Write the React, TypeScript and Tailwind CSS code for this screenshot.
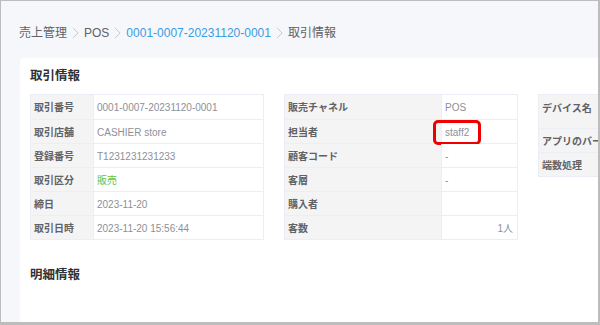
const FONT = { fontFamily: '"Liberation Sans", "Noto Sans CJK JP", sans-serif' };

type Row = { label: string; value?: string; tone?: "green"; right?: boolean; mark?: boolean; tall?: boolean };

const left: Row[] = [
  { label: "取引番号", value: "0001-0007-20231120-0001" },
  { label: "取引店舗", value: "CASHIER store" },
  { label: "登録番号", value: "T1231231231233" },
  { label: "取引区分", value: "販売", tone: "green" },
  { label: "締日", value: "2023-11-20" },
  { label: "取引日時", value: "2023-11-20 15:56:44" },
];

const middle: Row[] = [
  { label: "販売チャネル", value: "POS" },
  { label: "担当者", value: "staff2", mark: true },
  { label: "顧客コード", value: "-" },
  { label: "客層", value: "-" },
  { label: "購入者", value: "" },
  { label: "客数", value: "1人", right: true },
];

// third table runs off the right edge in the screenshot
const right: Row[] = [
  { label: "デバイス名", tall: true },
  { label: "アプリのバージョン" },
  { label: "端数処理" },
];

function Chevron() {
  return (
    <svg viewBox="0 0 8 14" className="h-[12px] w-[7px] shrink-0" fill="none" stroke="#c4c7cd" strokeWidth="1.1">
      <path d="m1 1 6 6-6 6" />
    </svg>
  );
}

function InfoTable({ rows, labelW, valueW }: { rows: Row[]; labelW: string; valueW: string }) {
  return (
    <div className="shrink-0 self-start border border-[#ebeef5]">
      {rows.map((r, i) => (
        <div
          key={r.label}
          className={`flex ${r.tall ? "h-[33px]" : "h-[24px]"} ${i > 0 ? "border-t border-[#ebeef5]" : ""}`}
        >
          <div
            className={`${labelW} flex shrink-0 bg-[#f4f4f5] pl-[3px] text-[10px] font-semibold text-[#606266] ${r.tall ? "items-start pt-[6px]" : "items-center pt-[1px]"}`}
          >
            <span className="whitespace-nowrap">{r.label}</span>
          </div>
          <div
            className={`${valueW} relative flex shrink-0 items-center border-l border-[#ebeef5] bg-white pl-[3px] pr-[4px] pt-[1px] text-[10px] ${r.right ? "justify-end" : ""} ${r.tone === "green" ? "text-[#67c23a]" : "text-[#8d9099]"}`}
          >
            <span className="whitespace-nowrap">{r.value}</span>
            {r.mark && (
              <div className="absolute left-[-9px] top-0 h-[25px] w-[48px] rounded-[5px] border-[3px] border-[#ee0000]" />
            )}
          </div>
        </div>
      ))}
    </div>
  );
}

export default function App() {
  return (
    <div
      style={FONT}
      className="flex h-[325px] w-[600px] flex-col overflow-hidden border-t border-l border-r-2 border-b-[3px] border-[#bdbdbd] bg-[#f5f7fa]"
    >
      <nav className="mt-[22px] flex h-[20px] items-center gap-[5px] pl-[18px] text-[12px] text-[#606266]">
        <span>売上管理</span>
        <Chevron />
        <span>POS</span>
        <Chevron />
        <span className="text-[#3b9be6]">0001-0007-20231120-0001</span>
        <Chevron />
        <span>取引情報</span>
      </nav>

      <div className="ml-[19px] mt-[15px] flex-1 overflow-hidden rounded-tl-sm bg-white pl-[10px] pt-[8px]">
        <h2 className="h-[20px] text-[12.5px] font-bold leading-[20px] text-[#303133]">取引情報</h2>
        <div className="mt-[8px] flex gap-[20px]">
          <InfoTable rows={left} labelW="w-[62px]" valueW="w-[170px]" />
          <InfoTable rows={middle} labelW="w-[156px]" valueW="w-[76px]" />
          <InfoTable rows={right} labelW="w-[130px]" valueW="w-[100px]" />
        </div>
        <h2 className="mt-[25px] h-[20px] text-[12.5px] font-bold leading-[20px] text-[#303133]">明細情報</h2>
      </div>
    </div>
  );
}
